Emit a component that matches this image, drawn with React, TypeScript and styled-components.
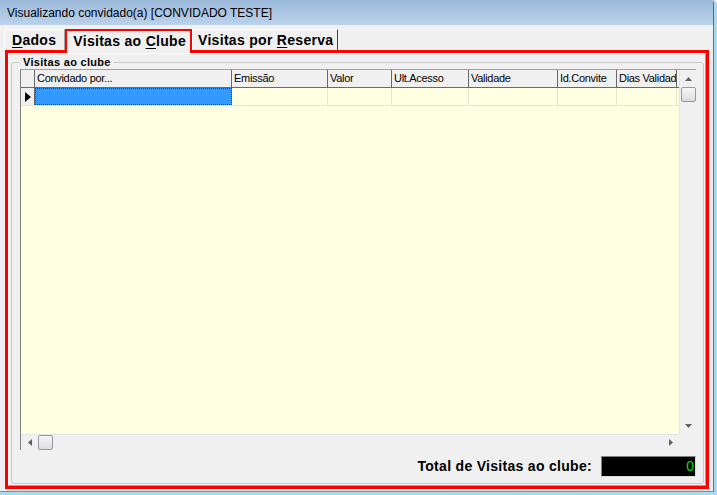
import styled, { createGlobalStyle } from 'styled-components';

const GlobalStyle = createGlobalStyle`
    html, body {
        margin: 0;
        padding: 0;
        background: #f0f0f0;
        font-family: "Liberation Sans", Arial, sans-serif;
    }
    * {
        box-sizing: border-box;
    }
`;

interface Column {
    title: string;
    width: number;
}

const columns: Column[] = [
    { title: 'Convidado por...', width: 197 },
    { title: 'Emissão', width: 96 },
    { title: 'Valor', width: 64 },
    { title: 'Ult.Acesso', width: 77 },
    { title: 'Validade', width: 89 },
    { title: 'Id.Convite', width: 59 },
    { title: 'Dias Validade', width: 60 },
];

const gridTemplate = `14px ${columns.map((c) => `${c.width}px`).join(' ')}`;

export default function App() {
    return (
        <>
            <GlobalStyle />
            <Window>
                <TitleBar>Visualizando convidado(a) [CONVIDADO TESTE]</TitleBar>
                <Body>
                    <TabStrip>
                        <Tab $pad="0 8px 0 7px">
                            <span>
                                <u>D</u>ados
                            </span>
                        </Tab>
                        <Tab $selected $pad="0 4px 2px 6px">
                            <span>
                                Visitas ao <u>C</u>lube
                            </span>
                        </Tab>
                        <Tab $last $pad="0 4px 0 5px">
                            <span>
                                Visitas por <u>R</u>eserva
                            </span>
                        </Tab>
                    </TabStrip>
                    <Panel>
                        <PageFrame>
                            <GroupBox>
                                <Legend>Visitas ao clube</Legend>
                                <Grid>
                                    <Cells>
                                        <HeaderRow $template={gridTemplate}>
                                            <HeaderCell />
                                            {columns.map((c) => (
                                                <HeaderCell key={c.title}>{c.title}</HeaderCell>
                                            ))}
                                        </HeaderRow>
                                        <DataRow $template={gridTemplate}>
                                            <Indicator>
                                                <svg width="6" height="10" viewBox="0 0 6 10">
                                                    <path d="M0 0 L6 5 L0 10 Z" fill="#000" />
                                                </svg>
                                            </Indicator>
                                            {columns.map((c, i) => (
                                                <DataCell key={c.title} $focused={i === 0} />
                                            ))}
                                        </DataRow>
                                    </Cells>
                                    <VScroll>
                                        <ArrowButton>
                                            <svg width="7" height="4" viewBox="0 0 7 4">
                                                <path d="M0 4 L3.5 0 L7 4 Z" fill="#606060" />
                                            </svg>
                                        </ArrowButton>
                                        <Thumb />
                                        <Spacer />
                                        <ArrowButton>
                                            <svg width="7" height="4" viewBox="0 0 7 4">
                                                <path d="M0 0 L3.5 4 L7 0 Z" fill="#606060" />
                                            </svg>
                                        </ArrowButton>
                                    </VScroll>
                                    <HScroll>
                                        <ArrowButton>
                                            <svg width="4" height="7" viewBox="0 0 4 7">
                                                <path d="M4 0 L0 3.5 L4 7 Z" fill="#606060" />
                                            </svg>
                                        </ArrowButton>
                                        <Thumb />
                                        <Spacer />
                                        <ArrowButton>
                                            <svg width="4" height="7" viewBox="0 0 4 7">
                                                <path d="M0 0 L4 3.5 L0 7 Z" fill="#606060" />
                                            </svg>
                                        </ArrowButton>
                                    </HScroll>
                                    <Corner />
                                </Grid>
                                <Footer>
                                    <TotalLabel>Total de Visitas ao clube:</TotalLabel>
                                    <Counter>0</Counter>
                                </Footer>
                            </GroupBox>
                        </PageFrame>
                    </Panel>
                </Body>
            </Window>
        </>
    );
}

const Window = styled.div`
    width: 717px;
    height: 495px;
    display: flex;
    flex-direction: column;
    border-right: 3px solid #a9d9ec;
    border-bottom: 3px solid #a9d9ec;
    border-top-right-radius: 5px;
    overflow: hidden;
    background: #f0f0f0;
`;

const TitleBar = styled.div`
    height: 25px;
    flex-shrink: 0;
    display: flex;
    align-items: center;
    padding-left: 7px;
    background: linear-gradient(#9cb9da, #bad2ea);
    border-right: 1px solid #5c6a78;
    font-size: 12px;
    color: #000;
`;

const Body = styled.div`
    flex: 1;
    display: flex;
    flex-direction: column;
    border-right: 1px solid #6e6e6e;
    border-bottom: 1px solid #8c8c8c;
    padding: 0 4px 2px 5px;
`;

const TabStrip = styled.div`
    height: 25px;
    display: flex;
    align-items: flex-end;
    margin-left: -1px;
`;

const Tab = styled.div<{ $selected?: boolean; $last?: boolean; $pad: string }>`
    height: ${(p) => (p.$selected ? '24px' : '21px')};
    display: flex;
    align-items: center;
    padding: ${(p) => p.$pad};
    font-size: 14px;
    font-weight: bold;
    letter-spacing: 0.3px;
    white-space: pre;
    color: #000;
    border-left: 1px solid #fff;
    border-top: 1px solid #fff;
    border-right: 1px solid ${(p) => (p.$last ? '#404040' : '#a0a0a0')};
    ${(p) =>
        p.$selected &&
        `
        border: 2px solid #ff0000;
        border-bottom: none;
        background: #f0f0f0;
        margin-bottom: -3px;
        position: relative;
        z-index: 1;
    `}
    u {
        text-decoration-thickness: 1px;
        text-underline-offset: 2px;
    }
`;

const Panel = styled.div`
    flex: 1;
    display: flex;
    border: 3px solid #ff0000;
`;

const PageFrame = styled.div`
    flex: 1;
    display: flex;
    border-top: 1px solid #fff;
    border-left: 1px solid #fff;
    border-right: 1px solid #a0a0a0;
    border-bottom: 1px solid #a0a0a0;
    padding: 2px 1px 1px 2px;
`;

const GroupBox = styled.fieldset`
    flex: 1;
    margin: 0;
    min-width: 0;
    display: flex;
    flex-direction: column;
    border: 1px solid #c9c9c9;
    border-radius: 3px;
    padding: 0 7px 2px 8px;
`;

const Legend = styled.legend`
    font-size: 11px;
    font-weight: bold;
    letter-spacing: 0.3px;
    line-height: 12px;
    padding: 0 3px;
    margin-left: 0;
    color: #000;
`;

const Grid = styled.div`
    margin-top: 1px;
    height: 381px;
    display: grid;
    grid-template-columns: 1fr 17px;
    grid-template-rows: 1fr 16px;
    border-top: 1px solid #a0a0a0;
    border-left: 1px solid #808080;
    background: #ffffe1;
`;

const Cells = styled.div`
    overflow: hidden;
    background: #ffffe1;
`;

const HeaderRow = styled.div<{ $template: string }>`
    display: grid;
    grid-template-columns: ${(p) => p.$template};
    height: 18px;
    background: #f0f0f0;
    border-bottom: 1px solid #696969;
`;

const HeaderCell = styled.div`
    border-right: 1px solid #696969;
    padding-left: 2px;
    font-size: 11px;
    letter-spacing: -0.3px;
    line-height: 17px;
    white-space: nowrap;
    overflow: hidden;
    color: #000;
`;

const DataRow = styled.div<{ $template: string }>`
    display: grid;
    grid-template-columns: ${(p) => p.$template};
    height: 18px;
    border-bottom: 1px solid #e6e6cf;
`;

const Indicator = styled.div`
    display: flex;
    align-items: center;
    justify-content: center;
    background: #f0f0f0;
    border-right: 1px solid #696969;
`;

const DataCell = styled.div<{ $focused?: boolean }>`
    border-right: 1px solid #e6e6cf;
    background: ${(p) => (p.$focused ? '#3399ff' : '#ffffe1')};
    ${(p) => p.$focused && 'border: 1px dotted #5a3a10;'}
`;

const VScroll = styled.div`
    grid-row: 1;
    grid-column: 2;
    display: flex;
    flex-direction: column;
    align-items: center;
    background: #f0f0f0;
    border-left: 1px solid #e4e4e4;
    padding: 0 1px;
`;

const HScroll = styled.div`
    grid-row: 2;
    grid-column: 1;
    display: flex;
    align-items: center;
    background: #f0f0f0;
    border-top: 1px solid #e4e4e4;
    padding: 1px 0;
`;

const ArrowButton = styled.div`
    width: 17px;
    height: 17px;
    flex-shrink: 0;
    display: flex;
    align-items: center;
    justify-content: center;
`;

const Thumb = styled.div`
    width: 15px;
    height: 15px;
    flex-shrink: 0;
    border: 1px solid #989898;
    border-radius: 2px;
    background: linear-gradient(to bottom, #f6f6f6, #dcdcdc);
`;

const Spacer = styled.div`
    flex: 1;
`;

const Corner = styled.div`
    grid-row: 2;
    grid-column: 2;
    background: #f0f0f0;
`;

const Footer = styled.div`
    flex: 1;
    display: flex;
    align-items: center;
    justify-content: flex-end;
    gap: 9px;
    padding-top: 1px;
`;

const TotalLabel = styled.span`
    font-size: 14px;
    font-weight: bold;
    letter-spacing: 0.3px;
    color: #000;
`;

const Counter = styled.div`
    width: 95px;
    height: 21px;
    background: #000;
    border-top: 1px solid #808080;
    border-left: 1px solid #808080;
    border-right: 1px solid #dcdcdc;
    border-bottom: 1px solid #dcdcdc;
    color: #00e000;
    font-size: 14px;
    text-align: right;
    line-height: 19px;
    padding-right: 1px;
`;
